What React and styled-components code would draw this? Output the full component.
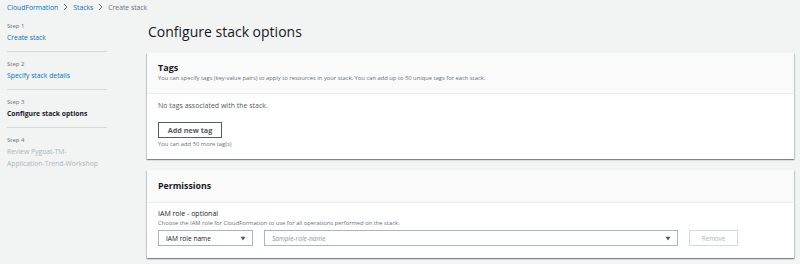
import React from 'react'
import styled, { createGlobalStyle } from 'styled-components'

const GlobalStyle = createGlobalStyle`
  html, body {
    margin: 0;
    padding: 0;
    background: #f2f3f3;
    font-family: "Open Sans", "Noto Sans", sans-serif;
    color: #16191f;
  }
`

const Page = styled.div`
  width: 800px;
  height: 264px;
  padding: 0 6px 0 7px;
  box-sizing: border-box;
  overflow: hidden;
`

const Breadcrumbs = styled.nav`
  display: flex;
  align-items: center;
  gap: 4px;
  height: 14px;
  font-size: 6.8px;
`

const Crumb = styled.span`
  color: ${p => (p.current ? '#687078' : '#0073bb')};
`

const Chevron = () => (
  <svg width="7" height="8" viewBox="0 0 7 8">
    <path d="M2 1 L5 4 L2 7" fill="none" stroke="#687078" strokeWidth="1" />
  </svg>
)

const Layout = styled.div`
  display: grid;
  grid-template-columns: 140px 647px;
  padding-top: 6px;
`

const Steps = styled.ol`
  list-style: none;
  margin: 0;
  padding: 1px 0 0;
  width: 100px;
`

const Step = styled.li`
  padding: 0 0 7px;
  margin-bottom: 7px;
  border-bottom: ${p => (p.last ? 'none' : '1px solid #d5dbdb')};
`

const StepLabel = styled.div`
  font-size: 6px;
  line-height: 11px;
  color: #687078;
`

const StepLink = styled.div`
  font-size: 6.8px;
  line-height: ${p => (p.tight ? '11px' : '12px')};
  color: ${p => (p.disabled ? '#aab7b8' : p.active ? '#16191f' : '#0073bb')};
  font-weight: ${p => (p.active ? 700 : 400)};
  white-space: nowrap;
`

const Main = styled.main`
  display: flex;
  flex-direction: column;
  gap: 11px;
`

const Heading = styled.h1`
  margin: 2px 0 0 1px;
  font-size: 14px;
  line-height: 20px;
  font-weight: 400;
  color: #16191f;
`

const Panel = styled.section`
  background: #fff;
  box-shadow: 0 1px 1px 0 rgba(0, 28, 36, 0.3), 1px 1px 1px 0 rgba(0, 28, 36, 0.15),
    -1px 1px 1px 0 rgba(0, 28, 36, 0.15);
`

const PanelHeader = styled.header`
  background: #fafafa;
  border-bottom: 1px solid #eaeded;
  padding: ${p => p.pad};
`

const PanelTitle = styled.h2`
  margin: 0;
  font-size: ${p => p.size};
  line-height: ${p => p.lh};
  font-weight: 700;
  color: #16191f;
`

const Hint = styled.div`
  font-size: 5.8px;
  line-height: ${p => p.lh || '9px'};
  color: #687078;
`

const PanelBody = styled.div`
  padding: ${p => p.pad};
`

const BodyText = styled.div`
  font-size: 7px;
  line-height: 12px;
  color: #545b64;
  margin-bottom: 10px;
`

const Button = styled.button`
  height: 16px;
  width: ${p => p.w};
  padding: 0;
  box-sizing: border-box;
  background: #fff;
  border: 1px solid ${p => (p.disabled ? '#d5dbdb' : '#545b64')};
  border-radius: 0;
  font-family: inherit;
  font-size: ${p => (p.disabled ? '6.2px' : '7.2px')};
  font-weight: ${p => (p.disabled ? 400 : 700)};
  color: ${p => (p.disabled ? '#aab7b8' : '#545b64')};
  display: block;
`

const FieldLabel = styled.div`
  font-size: 7px;
  line-height: 11px;
  color: #16191f;
`

const ControlRow = styled.div`
  display: flex;
  gap: 11px;
  margin-top: 3px;
  align-items: center;
`

const SelectBox = styled.div`
  width: ${p => p.w};
  height: 16px;
  box-sizing: border-box;
  border: 1px solid #aab7b8;
  background: #fff;
  display: flex;
  align-items: center;
  justify-content: space-between;
  padding: 0 6px 0 7px;
  font-size: 6.6px;
  color: ${p => (p.placeholder ? '#879596' : '#16191f')};
  font-style: ${p => (p.placeholder ? 'italic' : 'normal')};
`

const Caret = () => (
  <svg width="6" height="5" viewBox="0 0 6 5">
    <path d="M0.5 0.8 L5.5 0.8 L3 4.4 Z" fill="#545b64" />
  </svg>
)

export default function App() {
  return (
    <>
      <GlobalStyle />
      <Page>
        <Breadcrumbs>
          <Crumb>CloudFormation</Crumb>
          <Chevron />
          <Crumb>Stacks</Crumb>
          <Chevron />
          <Crumb current>Create stack</Crumb>
        </Breadcrumbs>
        <Layout>
          <Steps>
            <Step>
              <StepLabel>Step 1</StepLabel>
              <StepLink>Create stack</StepLink>
            </Step>
            <Step>
              <StepLabel>Step 2</StepLabel>
              <StepLink>Specify stack details</StepLink>
            </Step>
            <Step>
              <StepLabel>Step 3</StepLabel>
              <StepLink active>Configure stack options</StepLink>
            </Step>
            <Step last>
              <StepLabel>Step 4</StepLabel>
              <StepLink disabled>Review Pygoat-TM-</StepLink>
              <StepLink disabled tight>Application-Trend-Workshop</StepLink>
            </Step>
          </Steps>
          <Main>
            <Heading>Configure stack options</Heading>
            <Panel>
              <PanelHeader pad="9px 11px 10px">
                <PanelTitle size="9px" lh="12px">Tags</PanelTitle>
                <Hint>
                  You can specify tags (key-value pairs) to apply to resources in your stack. You can add up to 50
                  unique tags for each stack.
                </Hint>
              </PanelHeader>
              <PanelBody pad="6px 11px 9px">
                <BodyText>No tags associated with the stack.</BodyText>
                <Button w="64px">Add new tag</Button>
                <Hint lh="12px">You can add 50 more tag(s)</Hint>
              </PanelBody>
            </Panel>
            <Panel>
              <PanelHeader pad="10px 11px 9px">
                <PanelTitle size="8.8px" lh="13px">Permissions</PanelTitle>
              </PanelHeader>
              <PanelBody pad="5px 11px 12px">
                <FieldLabel>IAM role - optional</FieldLabel>
                <Hint lh="8px">
                  Choose the IAM role for CloudFormation to use for all operations performed on the stack.
                </Hint>
                <ControlRow>
                  <SelectBox w="95px">
                    IAM role name
                    <Caret />
                  </SelectBox>
                  <SelectBox w="414px" placeholder>
                    Sample-role-name
                    <Caret />
                  </SelectBox>
                  <Button w="49px" disabled>
                    Remove
                  </Button>
                </ControlRow>
              </PanelBody>
            </Panel>
          </Main>
        </Layout>
      </Page>
    </>
  )
}
